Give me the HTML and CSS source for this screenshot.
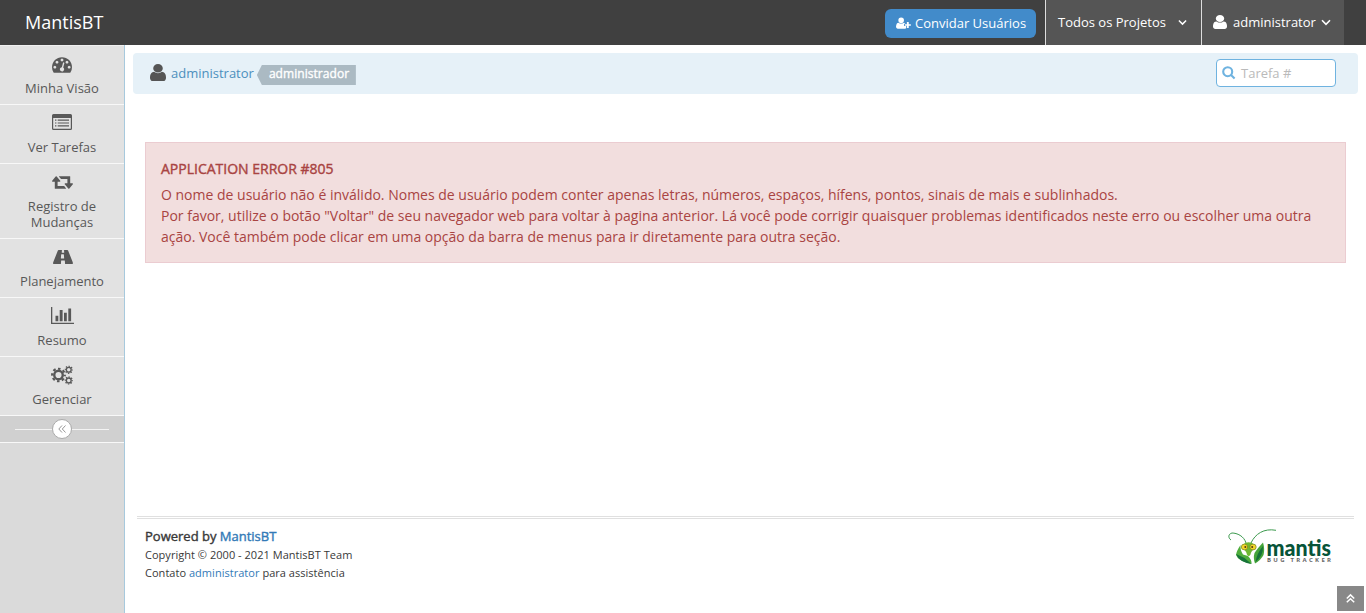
FILE: index.html
```html
<!DOCTYPE html>
<html lang="pt-BR">
<head>
<meta charset="utf-8">
<title>MantisBT</title>
<link rel="stylesheet" href="styles.css">
</head>
<body>
<svg class="defs" width="0" height="0" aria-hidden="true">
  <symbol id="user" viewBox="256 128 1280 1536" preserveAspectRatio="none"><path d="M1536 1399q0 109-62.5 187t-150.5 78h-854q-88 0-150.5-78t-62.5-187q0-85 8.5-160.5t31.5-152 58.5-131 94-89 134.5-34.5q131 128 313 128t313-128q76 0 134.5 34.5t94 89 58.5 131 31.5 152 8.5 160.5zm-256-887q0 159-112.5 271.5t-271.5 112.5-271.5-112.5-112.5-271.5 112.5-271.5 271.5-112.5 271.5 112.5 112.5 271.5z"/></symbol>
  <symbol id="gear" viewBox="-10 -10 20 20"><g fill="none" stroke="currentColor"><circle r="5.700" stroke-width="3.200"/><circle r="8.400" stroke-width="3" stroke-dasharray="3.400 3.197" stroke-dashoffset="1.700"/></g></symbol>
</svg>
<header class="navbar">
  <a class="brand">MantisBT</a>
  <div class="nav-right">
    <a class="invite"><svg class="invite-icon" viewBox="0 0 16 12"><path d="M5.5 0a3 3 0 0 1 3 3.1a3 3 0 0 1-6 0a3 3 0 0 1 3-3.1zM2.7 5.6q2.8 2 5.6 0q1.2.1 1.7 1.2H8.6v2.5h2.2v2.2q-.4.5-1.2.5H1.7Q0 12 0 10.1Q.2 5.700 2.700 5.600zM11.600 5h2v2.200h2.200v1.800h-2.200v2.300h-2v-2.300H9.500V7.200h2.100z"/></svg>Convidar Usuários</a>
    <a class="nav-item projects">Todos os Projetos<svg class="caret" viewBox="0 0 10 7"><path d="M1 1.300l4 4 4-4"/></svg></a>
    <a class="nav-item account"><svg class="account-icon"><use href="#user"/></svg>administrator<svg class="caret" viewBox="0 0 10 7"><path d="M1 1.300l4 4 4-4"/></svg></a>
  </div>
</header>
<div class="container">
  <aside class="sidebar">
    <a class="side-item"><span class="side-icon"><svg width="20" height="16" viewBox="0 256 1792 1408"><path d="M384 1152q0-53-37.500-90.500t-90.500-37.500-90.500 37.500-37.500 90.500 37.500 90.500 90.500 37.500 90.500-37.500 37.500-90.500zm192-448q0-53-37.500-90.500t-90.500-37.500-90.500 37.500-37.500 90.500 37.500 90.500 90.500 37.500 90.500-37.500 37.500-90.500zm428 481l101-382q6-26-7.500-48.500t-38.500-29.500-48 6.500-30 39.500l-101 382q-60 5-107 43.500t-63 98.500q-20 77 20 146t117 89 146-20 89-117q16-60-6-117t-72-91zm660-33q0-53-37.500-90.500t-90.500-37.500-90.500 37.500-37.500 90.500 37.500 90.500 90.500 37.500 90.500-37.500 37.500-90.500zm-640-640q0-53-37.500-90.500t-90.500-37.500-90.500 37.500-37.500 90.500 37.500 90.500 90.500 37.500 90.500-37.500 37.500-90.500zm448 192q0-53-37.500-90.500t-90.500-37.500-90.500 37.500-37.500 90.500 37.500 90.500 90.500 37.500 90.500-37.500 37.500-90.500zm320 448q0 261-141 483-19 29-54 29h-1402q-35 0-54-29-141-221-141-483 0-182 71-348t191-286 286-191 348-71 348 71 286 191 191 286 71 348z"/></svg></span><span>Minha Visão</span></a>
    <a class="side-item"><span class="side-icon list"><svg width="20" height="16" viewBox="0 0 20 16"><path fill-rule="evenodd" d="M1.500 0h17Q20 0 20 1.500v13q0 1.500-1.500 1.500h-17Q0 16 0 14.500v-13Q0 0 1.500 0zM1.200 4v10.300q0 .5.500.5h16.600q.5 0 .5-.5V4z"/><path d="M3 5.500h1.400v1.200H3zm0 2.900h1.400v1.200H3zm0 2.900h1.400v1.200H3zM5.700 5.500H17v1.200H5.700zm0 2.900H17v1.200H5.700zm0 2.900H17v1.200H5.700z"/></svg></span><span>Ver Tarefas</span></a>
    <a class="side-item"><span class="side-icon"><svg width="21" height="13" viewBox="0 384 1920 1152"><path d="M1280 1504q0 13-9.500 22.500t-22.500 9.500h-960q-8 0-13.500-2t-9-7-5.500-8-3-11.500-1-11.500v-600h-192q-26 0-45-19t-19-45q0-24 15-41l320-384q19-22 49-22t49 22l320 384q15 17 15 41 0 26-19 45t-45 19h-192v384h576q16 0 25 11l160 192q7 10 7 21zm640-416q0 24-15 41l-320 384q-20 23-49 23t-49-23l-320-384q-15-17-15-41 0-26 19-45t45-19h192v-384h-576q-16 0-25-12l-160-192q-7-9-7-20 0-13 9.500-22.500t22.500-9.500h960q8 0 13.500 2t9 7 5.500 8 3 11.500 1 11.500v600h192q26 0 45 19t19 45z"/></svg></span><span>Registro de<br>Mudanças</span></a>
    <a class="side-item"><span class="side-icon"><svg width="21" height="14" viewBox="0 310 1920 1282" preserveAspectRatio="none"><path d="M1111 1061v-4l-24-320q-1-13-11-22.500t-23-9.500h-186q-13 0-23 9.500t-11 22.500l-24 320v4q-1 12 8 20t21 8h244q12 0 21-8t8-20zm803 458q0 73-46 73h-704q13 0 22-9.500t8-22.500l-20-256q-1-13-11-22.500t-23-9.500h-272q-13 0-23 9.500t-11 22.500l-20 256q-1 13 8 22.500t22 9.500h-704q-46 0-46-73 0-54 26-116l417-1044q8-19 26-33t38-14h339q-13 0-23 9.500t-11 22.500l-15 192q-1 14 8 23t22 9h166q13 0 22-9t8-23l-15-192q-1-13-11-22.500t-23-9.500h339q20 0 38 14t26 33l417 1044q26 62 26 116z"/></svg></span><span>Planejamento</span></a>
    <a class="side-item"><span class="side-icon chart"><svg width="23" height="17" viewBox="0 0 23 17"><path d="M0 0h1.300v15.700H23V17H0zM4.500 8.700h2.800v5.600H4.500zM8.700 3h2.900v11.300H8.700zM13 5.800h2.800v8.500H13zM17.300 1.500h2.800v12.800h-2.800z"/></svg></span><span>Resumo</span></a>
    <a class="side-item"><span class="side-icon"><svg width="22" height="20" viewBox="0 0 22 20"><use href="#gear" x="0" y="2.500" width="15" height="15"/><use href="#gear" x="13.500" y=".5" width="8.500" height="8.500"/><use href="#gear" x="13.500" y="11.200" width="8.500" height="8.500"/></svg></span><span>Gerenciar</span></a>
    <div class="collapse"><span class="collapse-button"><svg width="8" height="8" viewBox="0 0 8 8"><path d="M4 .5L.8 4 4 7.500M7.500.5L4.300 4l3.200 3.500"/></svg></span></div>
  </aside>
  <main class="main">
    <div class="breadcrumbs">
      <svg class="crumb-icon"><use href="#user"/></svg>
      <a class="crumb-name">administrator</a>
      <span class="role">administrador</span>
      <label class="search"><svg width="14" height="14" viewBox="0 0 14 14"><circle cx="5.700" cy="5.700" r="4.500"/><path d="M9 9l3.600 3.600"/></svg><span>Tarefa #</span></label>
    </div>
    <section class="alert">
      <p class="alert-title">APPLICATION ERROR #805</p>
      <p>O nome de usuário não é inválido. Nomes de usuário podem conter apenas letras, números, espaços, hífens, pontos, sinais de mais e sublinhados.</p>
      <p>Por favor, utilize o botão "Voltar" de seu navegador web para voltar à pagina anterior. Lá você pode corrigir quaisquer problemas identificados neste erro ou escolher uma outra ação. Você também pode clicar em uma opção da barra de menus para ir diretamente para outra seção.</p>
    </section>
    <footer class="footer">
      <div class="credits">
        <p class="powered">Powered by <a>MantisBT</a></p>
        <p>Copyright © 2000 - 2021 MantisBT Team</p>
        <p>Contato <a>administrator</a> para assistência</p>
      </div>
      <svg class="logo" width="104" height="36" viewBox="0 0 104 36">
        <g fill="none" stroke="#3c9a4e" stroke-width="1"><path d="M18 14C16 7 9 4 4 4C0 5 0 9 3 11"/><path d="M23 14C27 5 36-1 48 1.300"/></g>
        <path fill="#4fae3c" d="M12.500 16Q8.500 22 8 26Q10 32 23.500 35Q24 31 20 27L15 25.500Q12 21 12.500 16z"/>
        <path fill="#45a53a" d="M35 13.500Q29 20 26.500 24Q25 29 27 34.500Q33 31 35.500 26Q37 20 35 13.500z"/>
        <path fill="#17733a" d="M8 25q3 8 15.500 10l-7-6zM35 17q-6 7-7.500 16q8-6 7.500-16z"/>
        <path fill="#6fb832" d="M15 15.500q5.500-4.500 11.500 0l.5 4q-4 2.500-4.500 6q-1.800 3-3.600 0q-.5-3.500-4.400-6z"/>
        <g fill="#f2d52b" stroke="#71851f" stroke-width=".7"><ellipse cx="16.500" cy="18" rx="3.200" ry="2.900"/><ellipse cx="25" cy="18" rx="3.200" ry="2.900"/></g>
        <circle cx="17.300" cy="18" r="1" fill="#573b12"/><circle cx="24.200" cy="18" r="1" fill="#573b12"/>
        <text class="logo-name" x="38.500" y="27" textLength="64.500" lengthAdjust="spacingAndGlyphs">mantis</text>
        <text class="logo-sub" x="39" y="33" textLength="64">BUG TRACKER</text>
      </svg>
    </footer>
  </main>
</div>
<a class="scroll-up"><svg width="9" height="9" viewBox="0 0 9 9"><path d="M.8 4.500l3.700-3.600 3.700 3.600M.8 8.300l3.700-3.600 3.700 3.600"/></svg></a>
</body>
</html>
```
FILE: styles.css
```css
* { box-sizing: border-box; }
body { margin: 0; height: 613px; overflow: hidden; background: #fff; color: #393939; font: 13px/20px "Open Sans", sans-serif; }
p { margin: 0; }
svg { display: block; flex: none; fill: currentColor; overflow: visible; }
.defs { position: absolute; }
.navbar { height: 45px; padding: 0 22px 0 25px; display: flex; justify-content: space-between; background: #404040; color: #fff; }
.brand { font-size: 18px; line-height: 44px; }
.nav-right { display: flex; }
.invite { display: flex; align-items: center; width: 151px; height: 29px; margin: 9px 9px 0 0; padding: 0 0 1px 11px; border-radius: 6px; background: #428bca; white-space: nowrap; }
.invite-icon { width: 15px; height: 12px; margin-right: 4px; }
.nav-item { display: flex; align-items: center; border-left: 1px solid #ddd; background: #555; white-space: nowrap; padding-bottom: 1px; }
.projects { width: 156px; padding-left: 12px; }
.account { width: 143px; padding-left: 11px; }
.account-icon { width: 14px; height: 14px; margin: 0 6px 1px 0; }
.caret { width: 10px; height: 7px; fill: none; stroke: #fff; stroke-width: 1.6; margin-left: 5px; }
.projects .caret { margin-left: 12px; width: 9px; }
.container { display: flex; height: 568px; }
.sidebar { width: 125px; border-right: 1px solid #a7c9dd; background: #dadada; color: #585858; }
.side-item { display: flex; flex-direction: column; align-items: center; min-height: 59px; padding: 8px 0 8px; border-bottom: 1px solid #f8f8f8; background: #e2e2e2; text-align: center; line-height: 16px; }
.side-item:first-child { min-height: 60px; padding-top: 9px; border-top: 1px solid #f0f0f0; }
.side-icon { display: flex; height: 20px; margin-bottom: 6px; align-items: center; }
.list { padding-bottom: 2px; }
.chart { padding-bottom: 1px; }
.side-item:first-child .side-icon { height: 19px; }
.collapse { height: 27px; border-bottom: 1px solid #f8f8f8; background: #d0d0d0; display: flex; align-items: center; justify-content: center; }
.collapse::before, .collapse::after { content: ""; width: 37px; height: 1px; background: #f3f3f3; }
.collapse-button { width: 20px; height: 20px; display: flex; align-items: center; justify-content: center; border: 1px solid #aaa; border-radius: 50%; background: #fff; }
.collapse-button svg { fill: none; stroke: #999; }
.main { flex: 1; display: flex; flex-direction: column; padding: 8px 8px 0; }
.breadcrumbs { height: 41px; padding: 0 22px 0 17px; display: flex; align-items: center; border-radius: 4px; background: #e6f1f8; }
.crumb-icon { width: 16px; height: 17px; margin: 0 5px 2px 0; color: #555; }
.crumb-name { color: #4c8fbd; padding-bottom: 1px; }
.role { height: 20px; width: 99px; margin: 3px auto 0 3px; padding: 0 0 0 12px; clip-path: polygon(5px 0, 100% 0, 100% 100%, 5px 100%, 0 50%); background: #abbac3; color: #fff; font-size: 12px; line-height: 18px; letter-spacing: .05px; -webkit-text-stroke: .35px #fff; }
.search { width: 120px; height: 28px; margin-bottom: 1px; display: flex; align-items: center; gap: 5px; padding-left: 5px; border: 1px solid #6fb3e0; border-radius: 4px; background: #fff; color: #bababa; }
.search svg { fill: none; stroke: #6fb3e0; stroke-width: 2.1; }
.alert { height: 121px; margin: 48px 12px 0; padding: 15px; border: 1px solid #ebccd1; background: #f2dede; color: #a94442; font-size: 14px; line-height: 21px; }
.alert-title { line-height: 22px; margin-bottom: 4px; -webkit-text-stroke: .4px #a94442; }
.footer { margin: auto 4px 0; height: 97px; padding: 8px 22px 0 8px; display: flex; justify-content: space-between; border-top: 3px double #e0e0e0; font-size: 11px; line-height: 18px; letter-spacing: .03px; }
.footer a { color: #337ab7; }
.powered { font-size: 13px; line-height: 19px; letter-spacing: 0; -webkit-text-stroke: .4px; }
.logo { margin-top: 2px; letter-spacing: 0; }
.logo-name { font: 900 22px Lato, sans-serif; fill: #075439; }
.logo-sub { font: 700 6px "Open Sans", sans-serif; fill: #666; }
.scroll-up { position: fixed; right: 2px; bottom: 2px; width: 27px; height: 25px; display: flex; align-items: center; justify-content: center; background: #888; }
.scroll-up svg { fill: none; stroke: #fff; stroke-width: 1.5; }
```
